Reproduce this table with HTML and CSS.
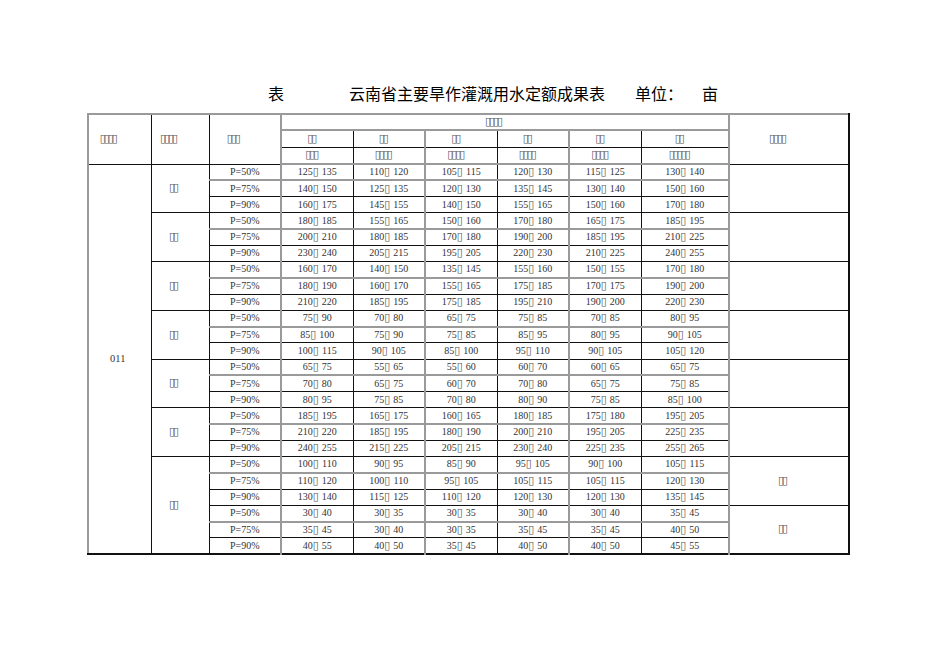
FILE: index.html
```html
<!DOCTYPE html>
<html lang="zh">
<head>
<meta charset="utf-8">
<title>云南省主要旱作灌溉用水定额成果表</title>
<link rel="stylesheet" href="styles.css">
</head>
<body>
<div class="page">
  <div class="title">
    <span class="t-a">表</span>
    <span class="t-b">云南省主要旱作灌溉用水定额成果表</span>
    <span class="t-c">单位：</span>
    <span class="t-d">亩</span>
  </div>
  <table class="sheet">
    <colgroup>
      <col class="w1"><col class="w2"><col class="w3">
      <col class="wd g"><col class="wd"><col class="wd g"><col class="wd"><col class="wd g"><col class="wl"><col class="w9 g">
    </colgroup>
    <tr class="hr1">
      <th rowspan="3" class="sh"><span class="t">▯▯▯▯</span></th>
      <th rowspan="3" class="sh"><span class="t">▯▯▯▯</span></th>
      <th rowspan="3" class="sh"><span class="t">▯▯▯</span></th>
      <th colspan="6" class="sh gb"><span class="t">▯▯▯▯</span></th>
      <th rowspan="3" class="sh"><span class="t">▯▯▯▯</span></th>
    </tr>
    <tr class="hr2">
      <th class="sh2"><span class="t">▯▯</span></th>
      <th class="sh2"><span class="t">▯▯</span></th>
      <th class="sh2"><span class="t">▯▯</span></th>
      <th class="sh2"><span class="t">▯▯</span></th>
      <th class="sh2"><span class="t">▯▯</span></th>
      <th class="sh2"><span class="t">▯▯</span></th>
    </tr>
    <tr class="hr3">
      <th class="sh2"><span class="t">▯▯▯</span></th>
      <th class="sh2"><span class="t">▯▯▯▯</span></th>
      <th class="sh2"><span class="t">▯▯▯▯</span></th>
      <th class="sh2"><span class="t">▯▯▯▯</span></th>
      <th class="sh2"><span class="t">▯▯▯▯</span></th>
      <th class="sh2"><span class="t">▯▯▯▯▯</span></th>
    </tr>

    <tr class="dr gt">
      <td rowspan="24" class="code">011</td>
      <td rowspan="3" class="lab"><span class="t">▯▯</span></td>
      <td>P=50%</td><td>125<span class="n">▯</span> 135</td><td>110<span class="n">▯</span> 120</td><td>105<span class="n">▯</span> 115</td><td>120<span class="n">▯</span> 130</td><td>115<span class="n">▯</span> 125</td><td>130<span class="n">▯</span> 140</td>
      <td rowspan="3"></td>
    </tr>
    <tr class="dr gl"><td>P=75%</td><td>140<span class="n">▯</span> 150</td><td>125<span class="n">▯</span> 135</td><td>120<span class="n">▯</span> 130</td><td>135<span class="n">▯</span> 145</td><td>130<span class="n">▯</span> 140</td><td>150<span class="n">▯</span> 160</td></tr>
    <tr class="dr"><td>P=90%</td><td>160<span class="n">▯</span> 175</td><td>145<span class="n">▯</span> 155</td><td>140<span class="n">▯</span> 150</td><td>155<span class="n">▯</span> 165</td><td>150<span class="n">▯</span> 160</td><td>170<span class="n">▯</span> 180</td></tr>

    <tr class="dr">
      <td rowspan="3" class="lab"><span class="t">▯▯</span></td>
      <td>P=50%</td><td>180<span class="n">▯</span> 185</td><td>155<span class="n">▯</span> 165</td><td>150<span class="n">▯</span> 160</td><td>170<span class="n">▯</span> 180</td><td>165<span class="n">▯</span> 175</td><td>185<span class="n">▯</span> 195</td>
      <td rowspan="3"></td>
    </tr>
    <tr class="dr gl"><td>P=75%</td><td>200<span class="n">▯</span> 210</td><td>180<span class="n">▯</span> 185</td><td>170<span class="n">▯</span> 180</td><td>190<span class="n">▯</span> 200</td><td>185<span class="n">▯</span> 195</td><td>210<span class="n">▯</span> 225</td></tr>
    <tr class="dr"><td>P=90%</td><td>230<span class="n">▯</span> 240</td><td>205<span class="n">▯</span> 215</td><td>195<span class="n">▯</span> 205</td><td>220<span class="n">▯</span> 230</td><td>210<span class="n">▯</span> 225</td><td>240<span class="n">▯</span> 255</td></tr>

    <tr class="dr">
      <td rowspan="3" class="lab"><span class="t">▯▯</span></td>
      <td>P=50%</td><td>160<span class="n">▯</span> 170</td><td>140<span class="n">▯</span> 150</td><td>135<span class="n">▯</span> 145</td><td>155<span class="n">▯</span> 160</td><td>150<span class="n">▯</span> 155</td><td>170<span class="n">▯</span> 180</td>
      <td rowspan="3"></td>
    </tr>
    <tr class="dr gl"><td>P=75%</td><td>180<span class="n">▯</span> 190</td><td>160<span class="n">▯</span> 170</td><td>155<span class="n">▯</span> 165</td><td>175<span class="n">▯</span> 185</td><td>170<span class="n">▯</span> 175</td><td>190<span class="n">▯</span> 200</td></tr>
    <tr class="dr"><td>P=90%</td><td>210<span class="n">▯</span> 220</td><td>185<span class="n">▯</span> 195</td><td>175<span class="n">▯</span> 185</td><td>195<span class="n">▯</span> 210</td><td>190<span class="n">▯</span> 200</td><td>220<span class="n">▯</span> 230</td></tr>

    <tr class="dr">
      <td rowspan="3" class="lab"><span class="t">▯▯</span></td>
      <td>P=50%</td><td>75<span class="n">▯</span> 90</td><td>70<span class="n">▯</span> 80</td><td>65<span class="n">▯</span> 75</td><td>75<span class="n">▯</span> 85</td><td>70<span class="n">▯</span> 85</td><td>80<span class="n">▯</span> 95</td>
      <td rowspan="3"></td>
    </tr>
    <tr class="dr gl"><td>P=75%</td><td>85<span class="n">▯</span> 100</td><td>75<span class="n">▯</span> 90</td><td>75<span class="n">▯</span> 85</td><td>85<span class="n">▯</span> 95</td><td>80<span class="n">▯</span> 95</td><td>90<span class="n">▯</span> 105</td></tr>
    <tr class="dr"><td>P=90%</td><td>100<span class="n">▯</span> 115</td><td>90<span class="n">▯</span> 105</td><td>85<span class="n">▯</span> 100</td><td>95<span class="n">▯</span> 110</td><td>90<span class="n">▯</span> 105</td><td>105<span class="n">▯</span> 120</td></tr>

    <tr class="dr">
      <td rowspan="3" class="lab"><span class="t">▯▯</span></td>
      <td>P=50%</td><td>65<span class="n">▯</span> 75</td><td>55<span class="n">▯</span> 65</td><td>55<span class="n">▯</span> 60</td><td>60<span class="n">▯</span> 70</td><td>60<span class="n">▯</span> 65</td><td>65<span class="n">▯</span> 75</td>
      <td rowspan="3"></td>
    </tr>
    <tr class="dr gl"><td>P=75%</td><td>70<span class="n">▯</span> 80</td><td>65<span class="n">▯</span> 75</td><td>60<span class="n">▯</span> 70</td><td>70<span class="n">▯</span> 80</td><td>65<span class="n">▯</span> 75</td><td>75<span class="n">▯</span> 85</td></tr>
    <tr class="dr"><td>P=90%</td><td>80<span class="n">▯</span> 95</td><td>75<span class="n">▯</span> 85</td><td>70<span class="n">▯</span> 80</td><td>80<span class="n">▯</span> 90</td><td>75<span class="n">▯</span> 85</td><td>85<span class="n">▯</span> 100</td></tr>

    <tr class="dr">
      <td rowspan="3" class="lab"><span class="t">▯▯</span></td>
      <td>P=50%</td><td>185<span class="n">▯</span> 195</td><td>165<span class="n">▯</span> 175</td><td>160<span class="n">▯</span> 165</td><td>180<span class="n">▯</span> 185</td><td>175<span class="n">▯</span> 180</td><td>195<span class="n">▯</span> 205</td>
      <td rowspan="3"></td>
    </tr>
    <tr class="dr gl"><td>P=75%</td><td>210<span class="n">▯</span> 220</td><td>185<span class="n">▯</span> 195</td><td>180<span class="n">▯</span> 190</td><td>200<span class="n">▯</span> 210</td><td>195<span class="n">▯</span> 205</td><td>225<span class="n">▯</span> 235</td></tr>
    <tr class="dr"><td>P=90%</td><td>240<span class="n">▯</span> 255</td><td>215<span class="n">▯</span> 225</td><td>205<span class="n">▯</span> 215</td><td>230<span class="n">▯</span> 240</td><td>225<span class="n">▯</span> 235</td><td>255<span class="n">▯</span> 265</td></tr>

    <tr class="dr">
      <td rowspan="6" class="lab"><span class="t">▯▯</span></td>
      <td>P=50%</td><td>100<span class="n">▯</span> 110</td><td>90<span class="n">▯</span> 95</td><td>85<span class="n">▯</span> 90</td><td>95<span class="n">▯</span> 105</td><td>90<span class="n">▯</span> 100</td><td>105<span class="n">▯</span> 115</td>
      <td rowspan="3" class="lab"><span class="t">▯▯</span></td>
    </tr>
    <tr class="dr gl"><td>P=75%</td><td>110<span class="n">▯</span> 120</td><td>100<span class="n">▯</span> 110</td><td>95<span class="n">▯</span> 105</td><td>105<span class="n">▯</span> 115</td><td>105<span class="n">▯</span> 115</td><td>120<span class="n">▯</span> 130</td></tr>
    <tr class="dr"><td>P=90%</td><td>130<span class="n">▯</span> 140</td><td>115<span class="n">▯</span> 125</td><td>110<span class="n">▯</span> 120</td><td>120<span class="n">▯</span> 130</td><td>120<span class="n">▯</span> 130</td><td>135<span class="n">▯</span> 145</td></tr>
    <tr class="dr">
      <td>P=50%</td><td>30<span class="n">▯</span> 40</td><td>30<span class="n">▯</span> 35</td><td>30<span class="n">▯</span> 35</td><td>30<span class="n">▯</span> 40</td><td>30<span class="n">▯</span> 40</td><td>35<span class="n">▯</span> 45</td>
      <td rowspan="3" class="lab"><span class="t">▯▯</span></td>
    </tr>
    <tr class="dr gl"><td>P=75%</td><td>35<span class="n">▯</span> 45</td><td>30<span class="n">▯</span> 40</td><td>30<span class="n">▯</span> 35</td><td>35<span class="n">▯</span> 45</td><td>35<span class="n">▯</span> 45</td><td>40<span class="n">▯</span> 50</td></tr>
    <tr class="dr"><td>P=90%</td><td>40<span class="n">▯</span> 55</td><td>40<span class="n">▯</span> 50</td><td>35<span class="n">▯</span> 45</td><td>40<span class="n">▯</span> 50</td><td>40<span class="n">▯</span> 50</td><td>45<span class="n">▯</span> 55</td></tr>
  </table>
</div>
</body>
</html>
```

FILE: styles.css
```css
html, body {
  margin: 0;
  background: #fff;
}

body {
  font-family: "Liberation Serif", "Times New Roman", serif;
  color: #333;
}

.page {
  padding: 83px 0 0 87px;
}

.title {
  display: flex;
  align-items: center;
  height: 20px;
  margin-left: 181px;
  font-family: "Noto Sans CJK SC", "Noto Sans", sans-serif;
  font-size: 16px;
  line-height: 20px;
  color: #000;
}

.t-a { margin-right: 65px; }
.t-b { margin-right: 30px; }
.t-c { margin-right: 19px; }

.sheet {
  margin-top: 10px;
  width: 761px;
  table-layout: fixed;
  border-collapse: collapse;
  border-top: 2px solid #9a9a9a;
  border-left: 2px solid #9a9a9a;
  border-right: 2px solid #111;
  border-bottom: 2px solid #111;
}

.w1 { width: 63px; }
.w2 { width: 58px; }
.w3 { width: 72px; }
.wd { width: 72px; }
.wl { width: 88px; }
.w9 { width: 120px; }

col.g {
  border-left: 2px solid #9a9a9a;
}

th, td {
  border: 1px solid #111;
  padding: 0;
  text-align: center;
  vertical-align: middle;
  font-weight: normal;
  font-size: 10px;
  line-height: 12px;
  white-space: nowrap;
}

.hr1 { height: 16px; }
.hr2 { height: 17px; }
.hr3 { height: 17px; }
.dr { height: 16.25px; }

.hr1 .gb {
  border-bottom: 2px solid #9a9a9a;
}

.hr3 th {
  border-bottom: 2px solid #9a9a9a;
}

.gl td {
  border-top: 2px solid #9a9a9a;
}

.sh {
  padding-right: 22px;
}

.sh2 {
  padding-right: 10px;
}

.lab {
  padding-right: 12px;
}

.code {
  font-size: 10.5px;
  padding-right: 4px;
}

.t {
  font-family: "DejaVu Sans", sans-serif;
  font-size: 11px;
  color: #555;
  letter-spacing: -2px;
  margin-right: 2px;
}

.n {
  font-family: "DejaVu Sans", sans-serif;
  font-size: 11px;
  color: #555;
  letter-spacing: -2.4px;
  margin-right: 3px;
}
```
